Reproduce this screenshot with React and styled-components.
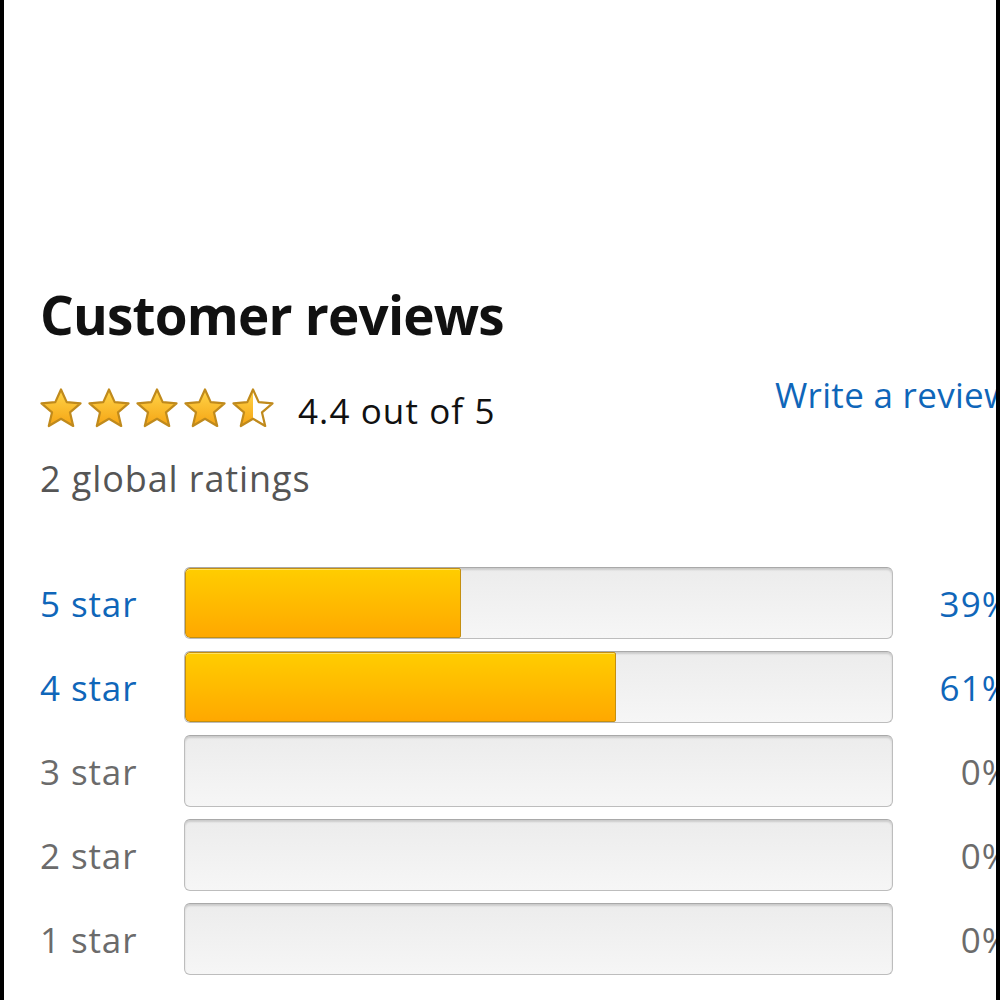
import React from "react";
import styled, { createGlobalStyle } from "styled-components";

const GlobalStyle = createGlobalStyle`
  html, body {
    margin: 0;
    padding: 0;
    background: #fff;
  }
  body {
    font-family: "Open Sans", "Noto Sans", Arial, sans-serif;
  }
`;

const Page = styled.div`
  box-sizing: border-box;
  width: 1000px;
  height: 1000px;
  border-left: 4px solid #000;
  border-right: 4px solid #000;
  background: #fff;
  overflow: hidden;
  padding: 283px 0 0 36px;
`;

const Heading = styled.h2`
  margin: 0;
  font-size: 53px;
  line-height: 64px;
  font-weight: 700;
  color: #111;
  letter-spacing: -0.8px;
`;

const RatingRow = styled.div`
  display: grid;
  grid-template-columns: 735px auto;
  align-items: start;
  margin-top: 34px;
  height: 48px;
`;

const StarsLine = styled.div`
  display: flex;
  align-items: center;
`;

const Stars = styled.div`
  display: flex;
  gap: 6px;
  margin-right: 24px;
`;

const Score = styled.span`
  font-size: 35px;
  line-height: 48px;
  color: #111;
  letter-spacing: 1.1px;
  margin-top: 6px;
`;

const Link = styled.a`
  color: #0f66b9;
  text-decoration: none;
  font-size: 35px;
  line-height: 44px;
  white-space: nowrap;
  letter-spacing: 0.3px;
  margin-top: -8px;
`;

const Total = styled.div`
  margin-top: 26px;
  font-size: 36px;
  line-height: 48px;
  color: #555;
  letter-spacing: 0.9px;
`;

const Rows = styled.div`
  margin-top: 64px;
  width: 972px;
  display: flex;
  flex-direction: column;
  gap: 12px;
`;

const Row = styled.div`
  display: grid;
  grid-template-columns: 144px 709px 1fr;
  align-items: center;
  height: 72px;
`;

const Label = styled.span`
  font-size: 35px;
  color: ${(p) => (p.$active ? "#0f66b9" : "#6b6b6b")};
  letter-spacing: 0.9px;
  white-space: nowrap;
`;

const Percent = styled(Label)`
  text-align: right;
  letter-spacing: 1.2px;
`;

const Track = styled.div`
  box-sizing: border-box;
  height: 72px;
  border: 1px solid #bdbdbd;
  border-top-color: #a9a9a9;
  border-radius: 6px;
  background: linear-gradient(#ececec, #f6f6f6);
  box-shadow: inset 0 2px 2px rgba(0, 0, 0, 0.14);
  overflow: hidden;
`;

const Fill = styled.div`
  box-sizing: border-box;
  height: 100%;
  border: 1px solid #c48f10;
  border-radius: 5px 2px 2px 5px;
  background: linear-gradient(#ffcd00, #ffa800);
  box-shadow: inset 0 1px 0 rgba(255, 240, 160, 0.6);
`;

const STAR =
  "M21 1.5 L26.7 14.1 L40.5 15.3 L30 24.4 L33.2 38 L21 30.8 L8.8 38 L12 24.4 L1.5 15.3 L15.3 14.1 Z";

const Star = ({ half, id }) => (
  <svg width="42" height="40" viewBox="0 0 42 40">
    <defs>
      <linearGradient id={`g${id}`} x1="0" y1="0" x2="0" y2="1">
        <stop offset="0" stopColor="#ffd54a" />
        <stop offset="1" stopColor="#f5a413" />
      </linearGradient>
      <clipPath id={`c${id}`}>
        <rect x="0" y="0" width="21" height="40" />
      </clipPath>
    </defs>
    <path d={STAR} fill="#fff" />
    <path d={STAR} fill={`url(#g${id})`} clipPath={half ? `url(#c${id})` : undefined} />
    <path d={STAR} fill="none" stroke="#c08a1c" strokeWidth="2.2" strokeLinejoin="round" />
  </svg>
);

const breakdown = [
  { label: "5 star", pct: 39 },
  { label: "4 star", pct: 61 },
  { label: "3 star", pct: 0 },
  { label: "2 star", pct: 0 },
  { label: "1 star", pct: 0 },
];

export default function App() {
  return (
    <>
      <GlobalStyle />
      <Page>
        <Heading>Customer reviews</Heading>
        <RatingRow>
          <StarsLine>
            <Stars>
              {[0, 1, 2, 3].map((i) => (
                <Star key={i} id={i} />
              ))}
              <Star id={4} half />
            </Stars>
            <Score>4.4 out of 5</Score>
          </StarsLine>
          <Link href="#">Write a review</Link>
        </RatingRow>
        <Total>2 global ratings</Total>
        <Rows>
          {breakdown.map((r) => (
            <Row key={r.label}>
              <Label $active={r.pct > 0}>{r.label}</Label>
              <Track>
                {r.pct > 0 && <Fill style={{ width: `${r.pct}%` }} />}
              </Track>
              <Percent $active={r.pct > 0}>{r.pct}%</Percent>
            </Row>
          ))}
        </Rows>
      </Page>
    </>
  );
}
